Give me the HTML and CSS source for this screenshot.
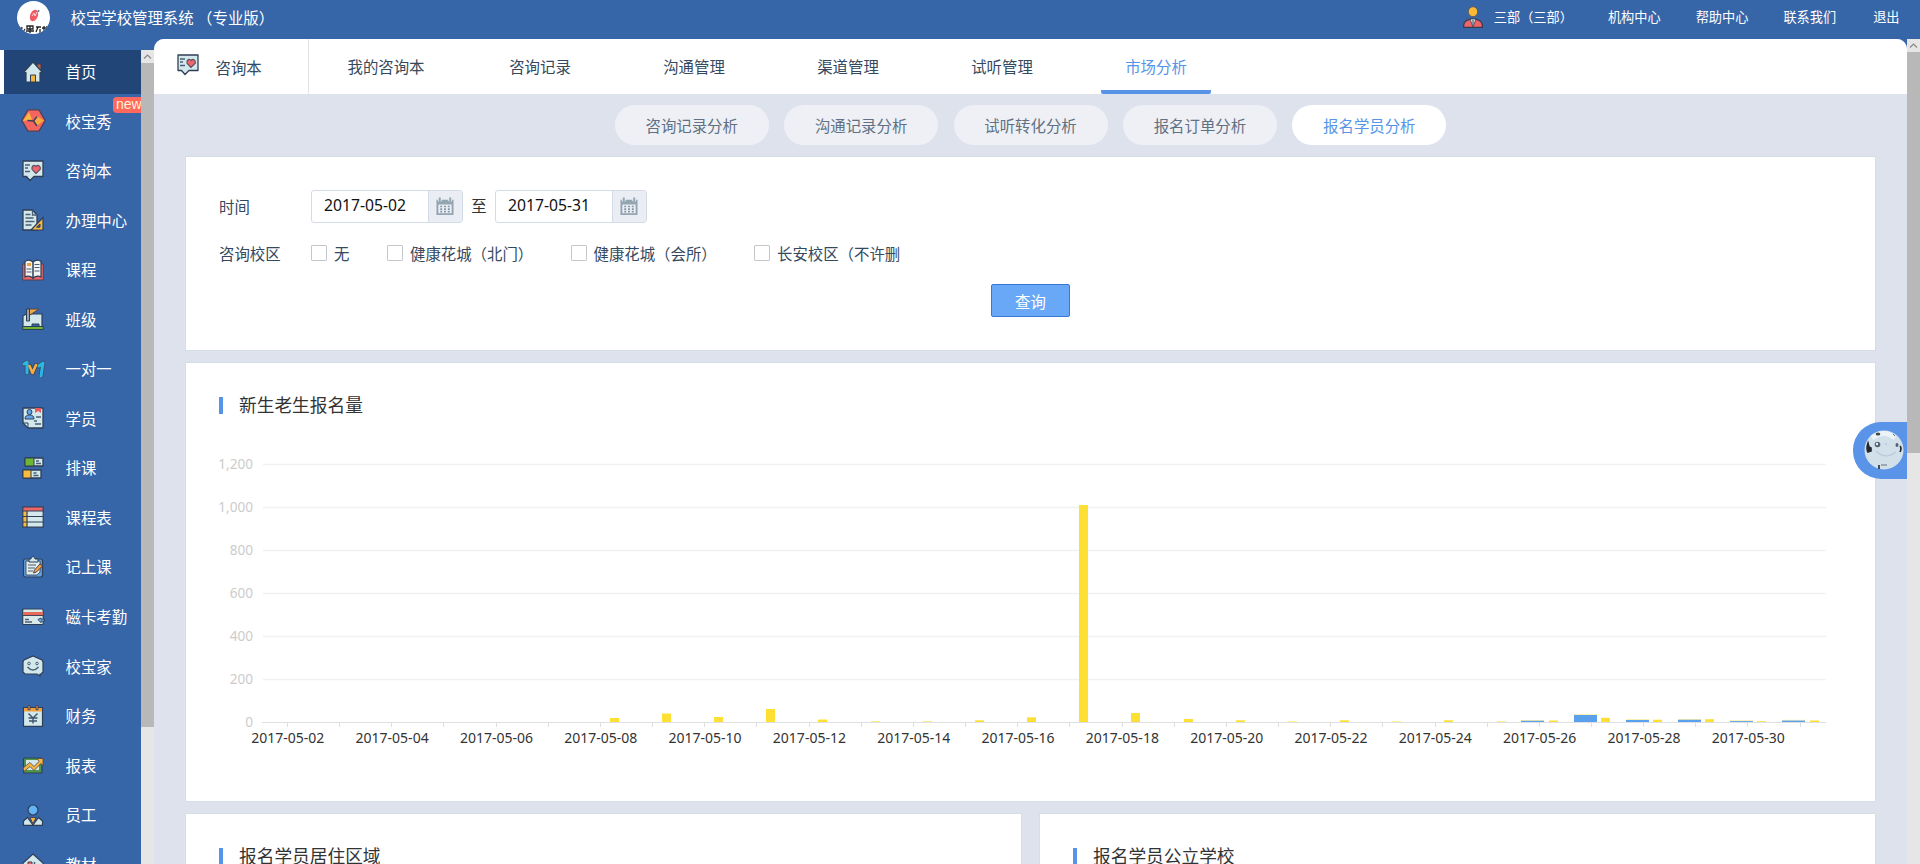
FILE: index.html
```html
<!DOCTYPE html>
<html lang="zh-CN">
<head>
<meta charset="utf-8">
<title>校宝学校管理系统</title>
<link rel="stylesheet" href="styles.css">
</head>
<body>
<svg class="defs" width="0" height="0">
  <symbol id="i-chat" viewBox="0 0 22 22"><path d="M1 1h20v15.500H12l-4 4-3.500-4H1z" fill="#d3e8ea" stroke="#2f3e57" stroke-width="1.300" stroke-linejoin="round"/><path d="M3 5h5M3 8h3M3 11.500h5" stroke="#4c5f78" stroke-width="1.300"/><path d="M14 13.500l-4-4.200C9.300 5.500 12.500 4.200 14 6.500c1.700-2.300 5-.8 4.300 2.800z" fill="#f1646a" stroke="#5b5364" stroke-width="1.200"/></symbol>
  <symbol id="i-cal" viewBox="0 0 20 20"><path d="M1 3h18v16H1z" fill="#93a5b1"/><path d="M3 8h14v9H3z" fill="#eaedf3"/><path d="M5 10h2M9 10h2M13 10h2M5 12.700h2M9 12.700h2M13 12.700h2M5 15.300h2M9 15.300h2M13 15.300h2" stroke="#8498a8" stroke-width="1.800"/><path d="M4.500 1v3.500M15.500 1v3.500" stroke="#eaedf3" stroke-width="4"/><path d="M4.500 .5v4M15.500 .5v4" stroke="#93a5b1" stroke-width="2"/></symbol>
</svg>

<header class="topbar">
  <svg class="logo" viewBox="0 0 33 33"><defs><clipPath id="lc"><circle cx="16.500" cy="16.500" r="16.500"/></clipPath></defs><circle cx="16.500" cy="16.500" r="16.500" fill="#fff"/><ellipse cx="17" cy="14.500" rx="3.800" ry="6" transform="rotate(22 17 14.500)" fill="#ef5a63"/><path d="M15 15l2-3 1 3 2-4M21 9.500l1-.5" stroke="#fff" fill="none" stroke-width=".7"/><circle cx="21.500" cy="10" r="1" fill="#53777d"/><g clip-path="url(#lc)" stroke="#222" stroke-width="1.300" fill="none"><path d="M2 26l3 3M5 26l-1 5M8 28l-2 3M10 25h6v3h-6zM13 25v7M9 30h8M19 26h5M21 26l-2 5M23 28v4M27 25v7M25 27h4M30 25l-1 6"/></g></svg>
  <div class="brand">校宝学校管理系统 <b class="pn" lang="zh-TW">（</b>专业版<b class="pn" lang="zh-TW">）</b></div>
  <svg class="avatar" viewBox="0 0 20 22"><path d="M.7 21.300v-2c0-3 2.800-5.500 6-6h6.600c3.200.5 6 3 6 6v2z" fill="#f1656a" stroke="#3b3b4b" stroke-width="1.300"/><path d="M7 13l3 8 3-8z" fill="#d9eced" stroke="#3b3b4b" stroke-width=".8"/><path d="M10 14v5" stroke="#5c6c7c" stroke-width="1.300"/><ellipse cx="10" cy="5.700" rx="4.700" ry="5" fill="#fbb934" stroke="#5b5a60"/></svg>
  <nav class="toplinks"><span>三部<b class="pn" lang="zh-TW">（</b>三部<b class="pn" lang="zh-TW">）</b></span><span>机构中心</span><span>帮助中心</span><span>联系我们</span><span>退出</span></nav>
</header>

<div class="shell">
  <aside class="side">
    <ul class="menu">
      <li class="on"><svg viewBox="0 0 22 22"><path d="M15 3h4v7h-4z" fill="#c0604e" stroke="#2f3e57"/><path d="M11 1L1.500 11.500H4V21h14v-9.500h2.500z" fill="#d3e8ea" stroke="#2f3e57" stroke-width="1.200" stroke-linejoin="round"/><path d="M8.500 14h5v7h-5z" fill="#f6b83c" stroke="#2f3e57"/></svg>首页</li>
      <li><svg class="hex" viewBox="0 0 25 23"><path d="M7 .8h11l6.200 10.700L18 22.200H7L.8 11.500z" fill="#f5655f" stroke="#4b4257" stroke-width="1.300"/><path d="M8 3l3 7.500L2 12z" fill="#f9b83f"/><path d="M15 6.500l8 5-7.500 5.500-2-5z" fill="#f9a83f"/><path d="M6.500 11.500l6 .5 3.500-4.500M12.500 12l3.500 5" fill="none" stroke="#3f4056" stroke-width="1.500"/></svg>校宝秀<b class="new">new</b></li>
      <li><svg><use href="#i-chat"/></svg>咨询本</li>
      <li><svg viewBox="0 0 22 22"><path d="M1 1h9.500l4.500 5v15H1z" fill="#d3e8ea" stroke="#2f3e57" stroke-width="1.300"/><path d="M10.500 1v5H15M3.500 5.500h5M3.500 9h8M3.500 12.500h9M3.500 16h6" fill="none" stroke="#4c5f78" stroke-width="1.300"/><path d="M21 8.500V21H9z" fill="#f5b942" stroke="#2f3e57" stroke-width="1.200"/><path d="M18 15v3.200h-3.500z" fill="#3766a8" stroke="#2f3e57"/></svg>办理中心</li>
      <li><svg viewBox="0 0 22 22"><path d="M.7 5h20.600v16H.7z" fill="#ef6467" stroke="#4b4257"/><path d="M3 2.500Q7-.5 11 3q4-3.500 8-.5V18q-4-2-8 1-4-3-8-1z" fill="#f2f4f1" stroke="#2f3e57" stroke-width="1.200"/><path d="M11 3v17" stroke="#2f3e57" stroke-width="1.500"/><path d="M5 4h4v3H5z" fill="#f5a23d"/><path d="M4.500 10h5M4.500 13h5M12.500 5.500h5M12.500 8.500h5M12.500 12h5" stroke="#4c5f78" stroke-width="1.200"/></svg>课程</li>
      <li><svg viewBox="0 0 22 22"><path d="M1 19V8l3-2h16v13z" fill="#d3e8ea" stroke="#2f3e57" stroke-width="1.200"/><path d="M5 1h12l-9 6" fill="#f5a83b" stroke="#4b4257"/><path d="M4.500 1h3v12h-3z" fill="#93a5af" stroke="#2f3e57"/><path d="M10 19v-3h7v3" fill="#3766a8" stroke="#2f3e57"/><path d="M.7 18.500h20.600v3H.7z" fill="#6db632" stroke="#2f3e57"/></svg>班级</li>
      <li><svg class="wide" viewBox="0 0 23 18"><g fill="none" stroke-linecap="round" stroke-linejoin="round"><path d="M2 4l3-2v11M17 6l4-3-2 13M7.500 6l3 7 3.500-8" stroke="#3a4767" stroke-width="4.500"/><path d="M2 4l3-2v11M17 6l4-3-2 13" stroke="#28b8e6" stroke-width="3"/><path d="M7.500 6l3 7 3.500-8" stroke="#f8ac3a" stroke-width="2.600"/></g></svg>一对一</li>
      <li><svg viewBox="0 0 22 22"><path d="M1 1h20v20H6l-5-5z" fill="#d3e8ea" stroke="#2f3e57" stroke-width="1.300" stroke-linejoin="round"/><path d="M1 16h5v5" fill="none" stroke="#2f3e57"/><path d="M13 1h6v5l-3-2-3 2z" fill="#e9595d"/><circle cx="7.500" cy="5" r="2.500" fill="#63a8ec" stroke="#2f3e57"/><path d="M3 12q0-4 4.500-4t4.500 4z" fill="#63a8ec" stroke="#2f3e57"/><path d="M14 10h5M12 14h3M13 17h6" stroke="#4c5f78" stroke-width="1.300"/></svg>学员</li>
      <li><svg viewBox="0 0 22 22"><path d="M3 1h18v8H3zM1 13h18v8H1z" fill="#d3e8ea" stroke="#2f3e57" stroke-width="1.300" stroke-linejoin="round"/><path d="M3 1h9v8H3z" fill="#6db632" stroke="#2f3e57"/><path d="M1 13h8v8H1z" fill="#f9bc3d" stroke="#2f3e57"/><path d="M14 4h3M14 6.500h5M11.500 16h3M11.500 18.500h5" stroke="#4c5f78" stroke-width="1.400"/></svg>排课</li>
      <li><svg viewBox="0 0 22 22"><path d="M.8 .8h20.400v20.400H.8z" fill="#d3e8ea"/><path d="M1 1h20v4H1z" fill="#f1646a"/><path d="M1 5h4v16H1z" fill="#f9bc3d"/><path d="M.8 .8h20.400v20.400H.8zM1 5h20M1 10.500h20M1 16h20M5 5v16" fill="none" stroke="#2f3e57" stroke-width="1.200"/></svg>课程表</li>
      <li><svg viewBox="0 0 22 22"><rect x="1.500" y="3" width="19" height="18" rx="2" fill="#62a1e0" stroke="#2f3e57" stroke-width="1.200"/><path d="M4 5h14v11l-3 3H4z" fill="#e3edeb" stroke="#2f3e57" stroke-width=".8"/><path d="M7 3h2c0-3 4-3 4 0h3v3H7z" fill="#d3e8ea" stroke="#2f3e57"/><path d="M6 9h8M6 12h7M6 15h5" stroke="#4c5f78" stroke-width="1.200"/><path d="M18 8l2.500 2-6 6-3 1 1-3z" fill="#f5a23d" stroke="#4b4257"/></svg>记上课</li>
      <li><svg class="wide" viewBox="0 0 23 18"><rect x=".7" y="1" width="20.500" height="15.500" rx="1" fill="#d9e9e8" stroke="#2f3e57" stroke-width="1.200"/><path d="M1 5.500h20" stroke="#e66a58" stroke-width="3"/><path d="M1 7.500h20" stroke="#4b4257"/><path d="M3 11.500h4M3 14h7" stroke="#4c5f78" stroke-width="1.300"/><path d="M16 11.500l3-1.500v1.200h3.500v2H19v1.500z" fill="#68b1ef" stroke="#2f3e57" stroke-width=".9"/></svg>磁卡考勤</li>
      <li><svg viewBox="0 0 22 22"><path d="M11 1l9 4 1 2v10l-2 2h-1v2l-3-2H3l-2-2V7l1-2z" fill="#d3e8ea" stroke="#2f3e57" stroke-width="1.200"/><circle cx="7" cy="8.500" r="1.300" fill="none" stroke="#4c5f78"/><circle cx="15" cy="8.500" r="1.300" fill="none" stroke="#4c5f78"/><path d="M5.500 12q5.500 6 11 0" fill="none" stroke="#4c5f78" stroke-width="1.500"/></svg>校宝家</li>
      <li><svg viewBox="0 0 22 22"><path d="M1.500 2.500h19v18.800h-19z" fill="#d3e8ea" stroke="#2f3e57" stroke-width="1.200"/><path d="M2 3h18v3.500H2z" fill="#f2a13d"/><path d="M6 .7h2v4H6zM14 .7h2v4h-2z" fill="#f2a13d" stroke="#4b4257"/><path d="M6.500 8.500L11 13l4.500-4.500M6.500 13h9M7 16h8M11 13v5.500" fill="none" stroke="#40536c" stroke-width="1.400"/></svg>财务</li>
      <li><svg viewBox="0 0 22 22"><rect x="1.500" y="4" width="18.500" height="15" rx="1" fill="#4f9648" stroke="#2f3e57" stroke-width="1.200"/><path d="M4 6h13v10H4z" fill="#d3e8ea"/><path d="M1 14l7-5.500 4 4 5-5-2-3h6v7l-2-2-7 7-4-4-6 5z" fill="#f9b53a" stroke="#4b4257" stroke-width=".8"/></svg>报表</li>
      <li><svg viewBox="0 0 22 22"><circle cx="11" cy="6" r="5" fill="#62b4f6" stroke="#2f3e57" stroke-width="1.200"/><path d="M1.500 21.300V17l4-3.500L11 21l5.500-7.500 4 3.500v4.300z" fill="#d3e8ea" stroke="#2f3e57" stroke-width="1.200"/><path d="M8 13.500h6L11 20z" fill="#f6b83c" stroke="#4b4257"/></svg>员工</li>
      <li><svg viewBox="0 0 22 22"><path d="M11 1l10 9v11H1V10z" fill="#d3e8ea" stroke="#2f3e57" stroke-width="1.200"/><path d="M6 9h4v6H6z" fill="#ef6467" stroke="#4b4257"/><path d="M12.500 9v6" stroke="#4c5f78" stroke-width="1.500"/></svg>教材</li>
    </ul>
    <div class="sbar"><i class="up"><svg viewBox="0 0 13 13"><path d="M3 8.500L6.500 5 10 8.500" fill="none" stroke="#888" stroke-width="1.200"/></svg></i><i class="thumb thumb-side"></i></div>
  </aside>

  <main class="main">
    <nav class="tabs">
      <div class="module"><svg><use href="#i-chat"/></svg>咨询本</div>
      <div class="tablist"><span>我的咨询本</span><span>咨询记录</span><span>沟通管理</span><span>渠道管理</span><span>试听管理</span><span class="on">市场分析</span></div>
    </nav>
    <div class="pills"><span>咨询记录分析</span><span>沟通记录分析</span><span>试听转化分析</span><span>报名订单分析</span><span class="on">报名学员分析</span></div>

    <section class="card filter">
      <div class="row dates"><label>时间</label>
        <div class="date"><span>2017-05-02</span><i><svg><use href="#i-cal"/></svg></i></div><em>至</em>
        <div class="date"><span>2017-05-31</span><i><svg><use href="#i-cal"/></svg></i></div></div>
      <div class="row checks"><label>咨询校区</label>
        <div class="opt c1"><i></i><span>无</span></div>
        <div class="opt c2"><i></i><span>健康花城<b class="pn" lang="zh-TW">（</b>北门<b class="pn" lang="zh-TW">）</b></span></div>
        <div class="opt c2"><i></i><span>健康花城<b class="pn" lang="zh-TW">（</b>会所<b class="pn" lang="zh-TW">）</b></span></div>
        <div class="opt"><i></i><span>长安校区<b class="pn" lang="zh-TW">（</b>不许删</span></div></div>
      <button class="query">查询</button>
    </section>

    <section class="card stat">
      <h2>新生老生报名量</h2>
      <svg class="chart" id="chart" viewBox="0 0 1630 310"></svg>
    </section>

    <div class="pair">
      <section class="card"><h2>报名学员居住区域</h2></section>
      <section class="card"><h2>报名学员公立学校</h2></section>
    </div>
  </main>
  <div class="sbar"><i class="up"><svg viewBox="0 0 13 13"><path d="M3 8.500L6.500 5 10 8.500" fill="none" stroke="#888" stroke-width="1.200"/></svg></i><i class="thumb thumb-page"></i></div>
</div>

<div class="helper"><svg viewBox="0 0 40 40"><circle cx="20" cy="20" r="19.500" fill="#d2e0ea"/><path d="M8 8q12-9 23 0" stroke="#ecf3f7" stroke-width="5" fill="none"/><path d="M12 21q9 9 20 1" stroke="#b9cad9" fill="none" stroke-width="1.200"/><circle cx="13.500" cy="14.500" r="2.800" fill="#536273"/><circle cx="13" cy="14" r="1.200" fill="#eef"/><ellipse cx="33" cy="15" rx="1.500" ry="2" fill="#536273"/><path d="M4 13q-2 6 0 9l3-1v-3l-2-1zM36 16q2 2 0 6M15 35v4" fill="#25292f" stroke="#25292f" stroke-width="1.600"/><ellipse cx="14" cy="4" rx="2.300" ry="1.600" fill="#40464f"/><path d="M29 4l2 2M17 35h6" stroke="#66707a"/><circle cx="22" cy="14" r="1" fill="#b7c9e6"/></svg></div>
<script src="chart.js"></script>
</body>
</html>
```
FILE: chart.js
```js
// Bar chart: wide blue series and narrow yellow series per day
(function () {
  var svg = document.getElementById('chart');
  var left = 10, base = 280, out = '';
  var rows = ['0', '200', '400', '600', '800', '1,000', '1,200'];
  rows.forEach(function (t, k) {
    var y = base - k * 43;
    if (k) out += '<line class="grid" x1="' + (left + 44) + '" x2="' + (left + 1607) + '" y1="' + (y + 0.5) + '" y2="' + (y + 0.5) + '"/>';
    out += '<text class="yl" x="' + (left + 34) + '" y="' + (y + 5) + '">' + t + '</text>';
  });
  var yellow = [0, 0, 0, 0, 0, 0, 4, 8.5, 5, 13, 2.5, 0.6, 0.6, 1.7, 4.7, 217, 9, 3, 1.7, 0.5, 1.7, 0.5, 1.7, 0.6, 1.5, 4.2, 2.3, 2.8, 0.8, 1.5];
  var blue = { 24: 1.2, 25: 7, 26: 2, 27: 2.2, 28: 0.9, 29: 1.4 };
  yellow.forEach(function (h, i) {
    var x = left + 68.5 + i * 52.16;
    if (blue[i]) {
      out += '<rect fill="#f7eda0" x="' + Math.round(x - 18) + '" y="' + (base - blue[i] - 0.8) + '" width="23" height="0.9"/>';
      out += '<rect fill="#5ba0ec" x="' + Math.round(x - 18) + '" y="' + (base - blue[i]) + '" width="23" height="' + blue[i] + '"/>';
    }
    if (h) out += '<rect fill="#fee034" x="' + Math.round(x + 9.4) + '" y="' + (base - h) + '" width="9" height="' + h + '"/>';
    var tx = Math.floor(x) + 0.5;
    out += '<line class="axis" x1="' + tx + '" x2="' + tx + '" y1="281" y2="285"/>';
    if (i % 2 === 0) out += '<text class="xl" x="' + (x + 0.3) + '" y="301">2017-05-' + (i + 2 < 10 ? '0' : '') + (i + 2) + '</text>';
  });
  out += '<line class="axis" x1="' + (left + 43) + '" x2="' + (left + 1607) + '" y1="280.5" y2="280.5"/>';
  svg.innerHTML = out;
})();
```
FILE: styles.css
```css
* { box-sizing: border-box; }
body { margin: 0; height: 864px; overflow: hidden; background: #3666a8; color: #34495e; font: 15.4px/22px "Noto Sans CJK SC", sans-serif; display: flex; flex-direction: column; }
i, em { font-style: normal; }
.pn { font-family: "Noto Sans CJK TC", sans-serif; font-weight: 400; }
.defs { position: absolute; }
.topbar { height: 39px; flex: none; display: flex; align-items: flex-start; color: #fff; padding-left: 17px; }
.logo { width: 33px; height: 33px; margin: 1px 20.500px 0 0; }
.brand { margin-top: 6px; flex: 1; white-space: pre; }
.avatar { width: 20px; height: 22px; margin: 6px 11px 0 0; }
.toplinks { display: flex; gap: 35px; font-size: 13.2px; margin: 6px 20.500px 0 0; }
.toplinks span:last-child { margin-left: 2px; }
.shell { display: flex; flex: 1; min-height: 0; }
.side { width: 154px; display: flex; padding-top: 11px; }
.menu { width: 141px; margin: 0; padding: 0; list-style: none; display: flex; flex-direction: column; gap: 5.550px; overflow: hidden; color: #fff; }
.menu li { position: relative; height: 44px; flex: none; padding: 0 0 2px 22px; display: flex; align-items: center; gap: 21.500px; white-space: nowrap; }
.menu li svg { width: 22px; height: 22px; flex: none; margin-top: 1px; }
.menu li svg.hex { width: 25px; height: 23px; margin: 0 -2px 0 -1px; }
.menu li svg.wide { width: 23px; height: 18px; margin-right: -1px; }
.menu .on { background: #224577; border-left: 4px solid #fff; padding-left: 18px; }
.new { position: absolute; left: 113px; top: -3px; width: 34px; height: 16px; border-radius: 4px; background: #ff695d; padding-left: 3px; font: 14px/14px "Liberation Sans", sans-serif; color: #fff3d6; }
.sbar { width: 13px; flex: none; background: #e6e6e6; }
.sbar i { display: block; }
.up { height: 13px; }
.up svg { display: block; width: 13px; height: 13px; }
.thumb { background: #b8b8b8; }
.thumb-side { height: 664px; }
.thumb-page { height: 401px; }
.main { width: 1753px; background: #dde2ed; border-radius: 10px 10px 0 0; overflow: hidden; }
.tabs { height: 55px; background: #fff; display: flex; }
.module { width: 155px; border-right: 1px solid #e1e4e8; padding: 0 0 0 23px; display: flex; align-items: center; gap: 16.500px; }
.module svg { width: 22px; height: 22px; margin-top: -3px; }
.tablist { display: flex; gap: 44px; padding-left: 22px; }
.tablist span { width: 110px; text-align: center; line-height: 55px; height: 55px; }
.tablist .on { color: #5794e8; border-bottom: 4px solid #5794e8; border-radius: 2px; }
.pills { display: flex; justify-content: center; gap: 15.400px; padding: 11px 0; }
.pills span { width: 154px; height: 40px; border-radius: 20px; background: #eef0f5; color: #617083; text-align: center; line-height: 40px; }
.pills .on { background: #fff; color: #5794e8; }
.card { background: #fff; border: 1px solid #d5dee8; }
.filter { margin: 0 31px; height: 195px; padding: 33px 33px 0; }
.row { display: flex; align-items: center; }
.row label { width: 92px; }
.dates { height: 33px; }
.dates label { margin-top: -1px; }
.dates em { width: 32px; text-align: center; margin-top: -4px; color: #333; }
.date { width: 152px; height: 33px; border: 1px solid #d3dce6; border-radius: 3px; display: flex; color: #111; overflow: hidden; font: 15.700px/29px "Noto Sans", "Noto Sans CJK SC", sans-serif; }
.date span { width: 116px; padding-left: 12px; }
.date i { flex: 1; background: #eaedf3; border-left: 1px solid #d3dce6; display: flex; align-items: center; padding-left: 6px; }
.date svg { width: 20px; height: 19px; }
.checks { height: 22px; margin-top: 19px; }
.opt { display: flex; align-items: center; gap: 7px; white-space: nowrap; }
.opt i { width: 16px; height: 16px; border: 1px solid #c5c8cb; border-radius: 1px; }
.opt span { margin-top: -1px; }
.c1 { width: 76px; }
.c2 { width: 183.500px; }
.query { display: block; margin: 20px auto 0; width: 79px; height: 33px; padding: 0; border: 1px solid #3a77d5; border-radius: 2px; background: #69a7f7; color: #fff; font: inherit; }
.stat { margin: 11px 31px 0; height: 440px; }
h2 { margin: 34px 0 0 33px; font-size: 17.700px; font-weight: 400; line-height: 15px; height: 17px; color: #333; border-left: 4px solid #5794e8; padding-left: 16px; }
.chart { display: block; width: 1630px; height: 310px; margin: 28px 0 0 23px; }
.grid { stroke: #f0f1f1; stroke-width: 1.300; }
.axis { stroke: #dddfe2; stroke-width: 1; }
.chart text { font: 14px "Noto Sans", sans-serif; }
.chart .yl { text-anchor: end; fill: #ccc; font-size: 13.600px; }
.xl { text-anchor: middle; fill: #333; }
.pair { display: grid; grid-template-columns: 1fr 1fr; gap: 17px; margin: 11px 31px 0; }
.pair .card { height: 300px; }
.helper { position: absolute; left: 1853px; top: 422px; width: 54px; height: 57px; border-radius: 28px 0 0 28px; background: #5a94e8; padding: 8px 0 0 11px; }
.helper svg { width: 40px; height: 40px; display: block; }
```
